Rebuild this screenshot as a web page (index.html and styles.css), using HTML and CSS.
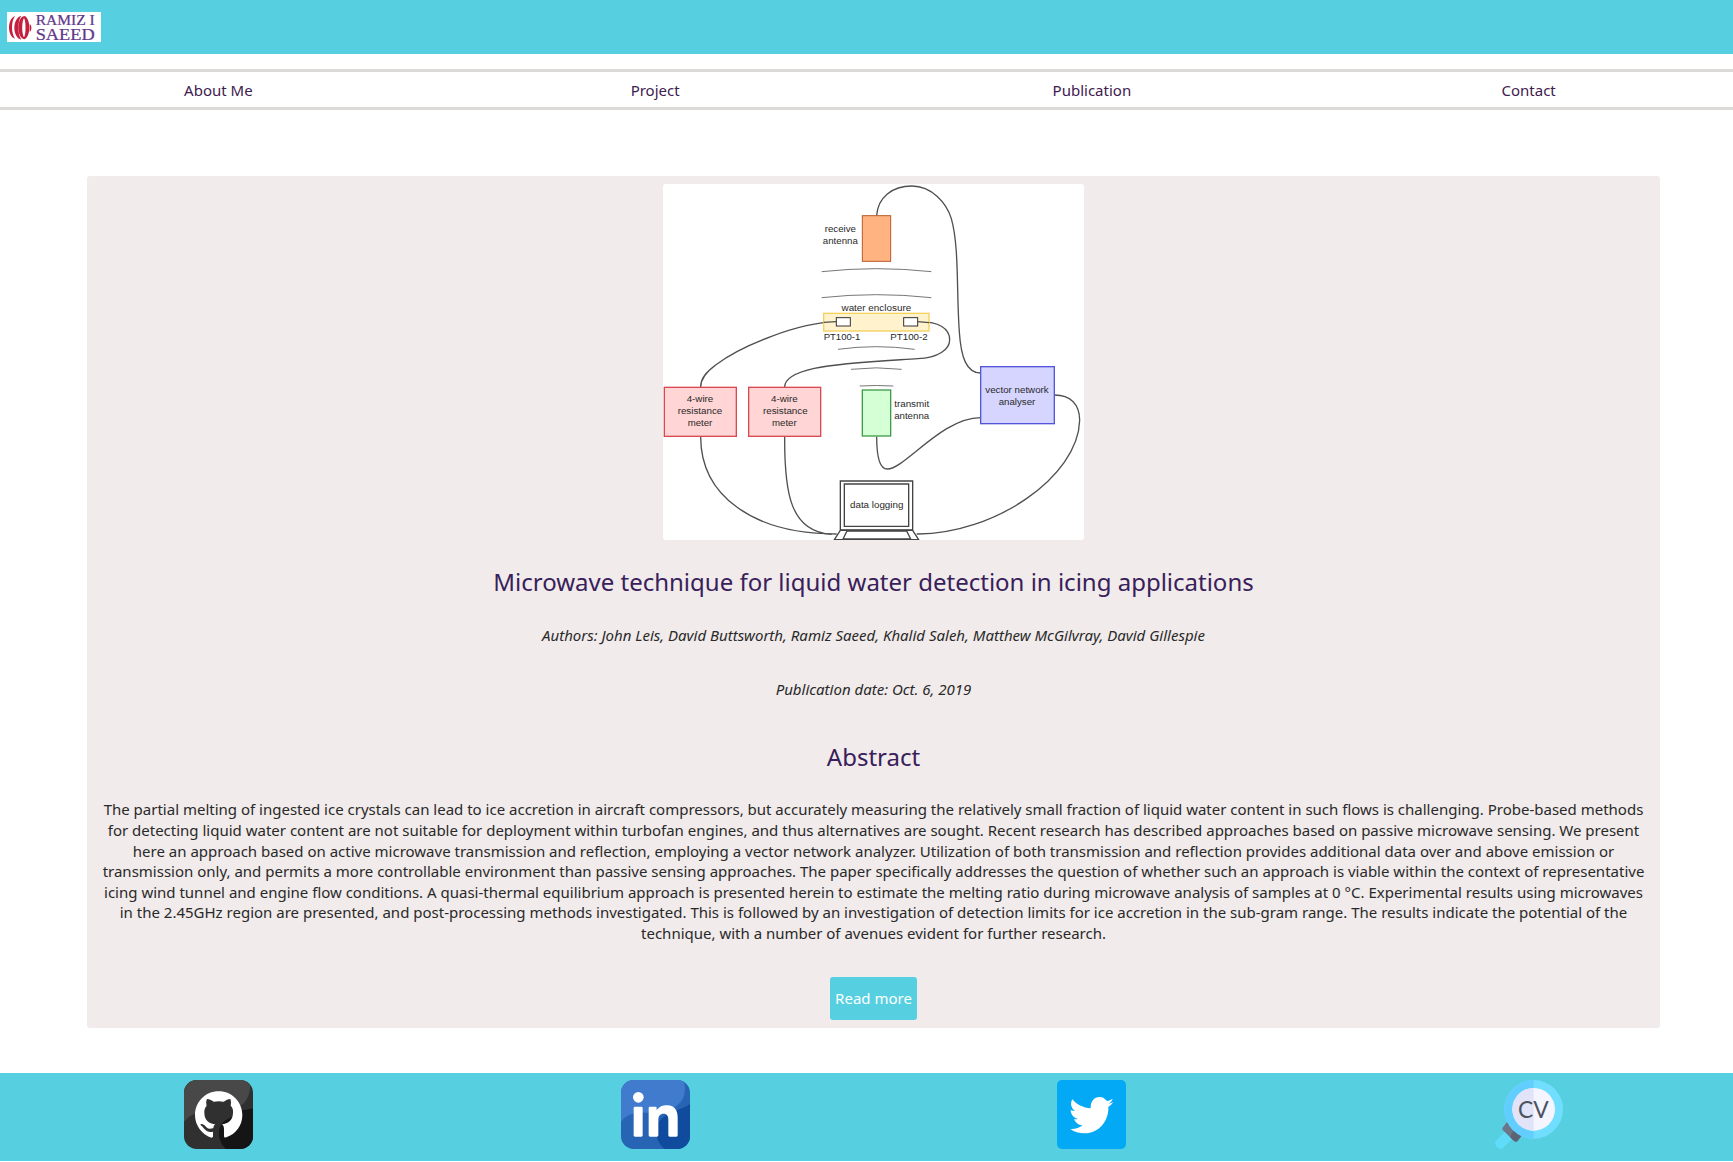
FILE: index.html
```html
<!DOCTYPE html>
<html lang="en">
<head>
<meta charset="utf-8">
<title>Ramiz I Saeed - Publication</title>
<link rel="stylesheet" href="styles.css">
</head>
<body>
<div class="page">
  <header class="header">
    <svg class="logo" viewBox="0 0 282 90" role="img" aria-label="Ramiz I Saeed">
      <rect width="282" height="90" fill="#fff"/>
      <g fill="#c51f3f">
        <path d="M24 13C0 20 0 74 24 80C12 64 12 28 24 13Z"/>
        <path d="M43 11C15 18 15 76 43 83C31 66 31 28 43 11Z"/>
        <path fill-rule="evenodd" d="M52 12C28 16 28 78 52 82C72 76 72 18 52 12ZM51 18C57 26 57 68 51 76C44 66 44 28 51 18Z"/>
        <path d="M68 36C75 40 75 55 68 60Z"/>
      </g>
      <text class="logo-text" x="86" y="39" font-size="44" textLength="177" lengthAdjust="spacingAndGlyphs">RAMIZ I</text>
      <text class="logo-text" x="86" y="85" font-size="49" textLength="177" lengthAdjust="spacingAndGlyphs">SAEED</text>
    </svg>
  </header>
  <nav class="nav">
    <a>About Me</a><a>Project</a><a>Publication</a><a>Contact</a>
  </nav>
  <main class="card">
    <svg class="diagram" viewBox="24 26 1263 1068" role="img" aria-label="Measurement setup">
      <rect x="24" y="26" width="1263" height="1068" fill="#fff"/>
      <g class="wire">
        <path d="M665 120C669 66 711 32 771 32C830 32 875 83 889 130C913 214 904 350 913 470C918 545 934 593 977 593"/>
        <path d="M543 439C430 442 260 510 183 568C153 590 137 609 137 635"/>
        <path d="M788 439C850 437 884 460 884 493C884 522 850 548 788 550C700 556 560 562 478 579C424 591 389 608 389 635"/>
        <path d="M137 784C137 958 290 1076 545 1076"/>
        <path d="M389 784C388 950 405 1070 530 1077"/>
        <path d="M665 784C665 840 672 881 697 881C750 881 860 727 977 727"/>
        <path d="M1199 659C1245 659 1274 686 1274 735C1270 905 1015 1078 785 1076"/>
      </g>
      <g class="wave">
        <path d="M500 289Q664 271 829 289M500 367Q664 349 829 367M549 522Q664 506 779 522M588 582Q664 573 740 582M614 632Q664 629 715 632"/>
      </g>
      <rect x="622" y="121" width="85" height="137" fill="#ffb380" stroke="#b85b2c" stroke-width="3"/>
      <rect x="506" y="414" width="316" height="53" fill="#fff2cc" stroke="#f3d15e" stroke-width="4"/>
      <path class="wire" d="M506 441L543 439M788 439L822 442"/>
      <rect x="544" y="427" width="42" height="25" fill="#fff" stroke="#333" stroke-width="3"/>
      <rect x="746" y="427" width="42" height="25" fill="#fff" stroke="#333" stroke-width="3"/>
      <g fill="#ffd5d5" stroke="#d94a50" stroke-width="4">
        <rect x="28" y="636" width="216" height="147"/>
        <rect x="281" y="636" width="216" height="147"/>
      </g>
      <rect x="622" y="644" width="85" height="138" fill="#d5ffd5" stroke="#3f9d4a" stroke-width="4"/>
      <rect x="977" y="574" width="221" height="171" fill="#d5d5ff" stroke="#5555dc" stroke-width="4"/>
      <g fill="#fff" stroke="#444" stroke-width="4">
        <path d="M556 917H773V1064H556Z"/>
        <path d="M568 926H761V1053H568Z"/>
        <path d="M556 1065H773L791 1093H538Z"/>
        <path d="M576 1067H755L767 1091H564Z"/>
      </g>
      <g class="label">
        <text x="556" y="170" textLength="94" lengthAdjust="spacingAndGlyphs">receive</text>
        <text x="556" y="207" textLength="105" lengthAdjust="spacingAndGlyphs">antenna</text>
        <text x="664" y="408" textLength="209" lengthAdjust="spacingAndGlyphs">water enclosure</text>
        <text x="561" y="494" textLength="110" lengthAdjust="spacingAndGlyphs">PT100-1</text>
        <text x="762" y="494" textLength="112" lengthAdjust="spacingAndGlyphs">PT100-2</text>
        <text x="135" y="680" textLength="80" lengthAdjust="spacingAndGlyphs">4-wire</text>
        <text x="135" y="717" textLength="134" lengthAdjust="spacingAndGlyphs">resistance</text>
        <text x="135" y="753" textLength="74" lengthAdjust="spacingAndGlyphs">meter</text>
        <text x="388" y="680" textLength="80" lengthAdjust="spacingAndGlyphs">4-wire</text>
        <text x="391" y="717" textLength="134" lengthAdjust="spacingAndGlyphs">resistance</text>
        <text x="388" y="753" textLength="74" lengthAdjust="spacingAndGlyphs">meter</text>
        <text x="770" y="694" textLength="105" lengthAdjust="spacingAndGlyphs">transmit</text>
        <text x="770" y="731" textLength="105" lengthAdjust="spacingAndGlyphs">antenna</text>
        <text x="1086" y="652" textLength="190" lengthAdjust="spacingAndGlyphs">vector network</text>
        <text x="1086" y="689" textLength="110" lengthAdjust="spacingAndGlyphs">analyser</text>
        <text x="665" y="998" textLength="160" lengthAdjust="spacingAndGlyphs">data logging</text>
      </g>
    </svg>
    <h1 class="title">Microwave technique for liquid water detection in icing applications</h1>
    <p class="meta">Authors: John Leis, David Buttsworth, Ramiz Saeed, Khalid Saleh, Matthew McGilvray, David Gillespie</p>
    <p class="meta">Publication date: Oct. 6, 2019</p>
    <h2 class="title subtitle">Abstract</h2>
    <p class="abstract">The partial melting of ingested ice crystals can lead to ice accretion in aircraft compressors, but accurately measuring the relatively small fraction of liquid water content in such flows is challenging. Probe-based methods for detecting liquid water content are not suitable for deployment within turbofan engines, and thus alternatives are sought. Recent research has described approaches based on passive microwave sensing. We present here an approach based on active microwave transmission and reflection, employing a vector network analyzer. Utilization of both transmission and reflection provides additional data over and above emission or transmission only, and permits a more controllable environment than passive sensing approaches. The paper specifically addresses the question of whether such an approach is viable within the context of representative icing wind tunnel and engine flow conditions. A quasi-thermal equilibrium approach is presented herein to estimate the melting ratio during microwave analysis of samples at 0 °C. Experimental results using microwaves in the 2.45GHz region are presented, and post-processing methods investigated. This is followed by an investigation of detection limits for ice accretion in the sub-gram range. The results indicate the potential of the technique, with a number of avenues evident for further research.</p>
    <a class="button">Read more</a>
  </main>
  <footer class="footer">
    <a><svg class="icon" viewBox="0 0 207 207" role="img" aria-label="GitHub">
      <clipPath id="round"><rect width="207" height="207" rx="38"/></clipPath>
      <g clip-path="url(#round)">
        <rect width="207" height="207" fill="#303030"/>
        <path d="M0 125Q22 94 75 96C130 100 207 90 198 0H0Z" fill="#484848"/>
        <path d="M207 86C160 90 110 105 106 152C105 180 112 195 126 207H207Z" fill="#151515"/>
      </g>
      <path fill="#303030" d="M61 54H147V145H61Z"/>
      <path fill="#151515" d="M148 110C122 118 106 132 106 152V176L125 176L148 140Z"/>
      <path fill="#fff" fill-rule="evenodd" d="M104 34C64 34 33 66 33 105C33 136 53 163 82 173C85 173 87 171 87 168V155C65 159 61 144 53 138C47 134 49 131 54 132C65 134 66 147 78 146C83 146 86 145 88 144C89 138 91 135 94 133C75 131 62 122 61 99C60 90 63 82 68 77C66 71 66 63 69 57C77 57 84 62 89 65C99 63 109 63 119 65C126 61 132 57 139 57C142 65 141 72 140 77C146 83 148 90 147 99C146 122 132 131 114 133C119 137 120 143 120 148V168C120 172 123 174 127 172C156 162 175 136 175 105C175 66 144 34 104 34Z"/>
    </svg></a>
    <a><svg class="icon" viewBox="0 0 207 207" role="img" aria-label="LinkedIn">
      <g clip-path="url(#round)">
        <rect width="207" height="207" fill="#2864b4"/>
        <path d="M0 125Q22 94 75 98C130 101 210 85 188 0H0Z" fill="#407bcd"/>
        <path d="M207 72C180 94 110 95 106 152C105 180 120 198 132 207H207Z" fill="#104b9d"/>
      </g>
      <g fill="#fff">
        <circle cx="52" cy="52" r="16"/>
        <rect x="38" y="80" width="27" height="90" rx="4"/>
        <path d="M87 80h16q4 0 4 4v7C115 80 125 76 139 76C162 77 170 92 170 113V166q0 4-4 4H146q-4 0-4-4V119C142 108 138 101 128 101C117 101 112 108 112 119V166q0 4-4 4H87q-4 0-4-4V84q0-4 4-4Z"/>
      </g>
    </svg></a>
    <a><svg class="icon" viewBox="0 0 207 207" role="img" aria-label="Twitter">
      <rect width="207" height="207" rx="15" fill="#03a9f4"/>
      <path fill="#fff" d="M169 66C165 68 160 70 155 71C160 68 165 62 167 56C162 59 156 62 150 63C144 56 137 51 128 51C111 51 100 65 101 85C79 84 58 73 46 58C39 70 42 85 54 93C49 93 45 92 41 90C41 103 50 114 63 117C59 118 55 118 51 117C55 128 65 136 77 136C67 144 54 148 40 147C52 156 66 160 82 160C129 160 156 120 154 81C160 77 165 72 169 66Z"/>
    </svg></a>
    <a><svg class="icon" viewBox="0 0 207 207" role="img" aria-label="CV">
      <path d="M35 153L5 183C-2 193 14 210 25 206L57 175Z" fill="#60dcfb"/>
      <path d="M39 126L82 168L70 184Q64 188 57 180L27 151Q22 146 28 140Z" fill="#6d7688"/>
      <path d="M61 148L82 168L70 184Q64 188 57 180L48 171Z" fill="#5b6477"/>
      <circle cx="119" cy="88" r="88" fill="#72deff"/>
      <path d="M119 0A88 88 0 0 0 119 176Z" fill="#62ceff"/>
      <circle cx="119" cy="88" r="64" fill="#f4f5ff"/>
      <path d="M119 24A64 64 0 0 0 119 152Z" fill="#e1e4f8"/>
      <text class="cv" x="118" y="115" textLength="92" lengthAdjust="spacingAndGlyphs">CV</text>
    </svg></a>
  </footer>
</div>
</body>
</html>
```
FILE: styles.css
```css
* { box-sizing: border-box; }
html { overflow: hidden; }
body {
  margin: 0;
  background: #fff;
  color: #292929;
  font-family: "Noto Sans", sans-serif;
  font-size: 15px;
  line-height: 20.6px;
}
.page { width: 1747px; }
.header {
  height: 54px;
  padding: 12px 7px;
  background: #56d0e0;
}
.logo { display: block; width: 94px; height: 30px; overflow: visible; }
.logo-text { font-family: "Liberation Serif", serif; fill: #62388c; stroke: #62388c; stroke-width: .7; }
.nav {
  display: grid;
  grid-template-columns: repeat(4, 1fr);
  align-items: center;
  height: 41.4px;
  margin-top: 15px;
  padding-top: 1px;
  border-top: 3px solid #dcd9d9;
  border-bottom: 3px solid #dcd9d9;
  color: #402050;
  text-align: center;
}
.card {
  display: flex;
  flex-direction: column;
  align-items: center;
  width: 90%;
  height: 852.4px;
  margin: 65.6px auto 0;
  padding: 7.8px 15px 8px;
  border-radius: 3px;
  background: #f1ebeb;
  text-align: center;
}
.diagram { display: block; flex: none; width: 421px; height: 356px; border-radius: 3px; }
.wire { fill: none; stroke: #505050; stroke-width: 4; }
.wave { fill: none; stroke: #777; stroke-width: 3; }
.label { fill: #292929; font: 29px "Liberation Sans", sans-serif; text-anchor: middle; }
.title {
  margin: 25.4px 0 0;
  color: #38205a;
  font-size: 24px;
  font-weight: 400;
  line-height: 33px;
}
.meta { margin: 26.4px 0 0; font-style: italic; line-height: 21px; }
.meta + .meta { margin-top: 33px; }
.subtitle { margin-top: 40.2px; }
.abstract { margin: 26.6px 0 0; }
.button {
  margin-top: 33px;
  padding: 11px 5px;
  border-radius: 3px;
  background: #56d0e0;
  color: #fff;
  line-height: 21px;
}
.footer {
  display: grid;
  grid-template-columns: repeat(4, 1fr);
  justify-items: center;
  height: 88px;
  margin-top: 45px;
  padding-top: 7px;
  background: #56d0e0;
}
.icon { display: block; width: 69px; height: 69px; overflow: visible; }
.cv { font: 69px Lato, sans-serif; fill: #4c5362; text-anchor: middle; }
```
